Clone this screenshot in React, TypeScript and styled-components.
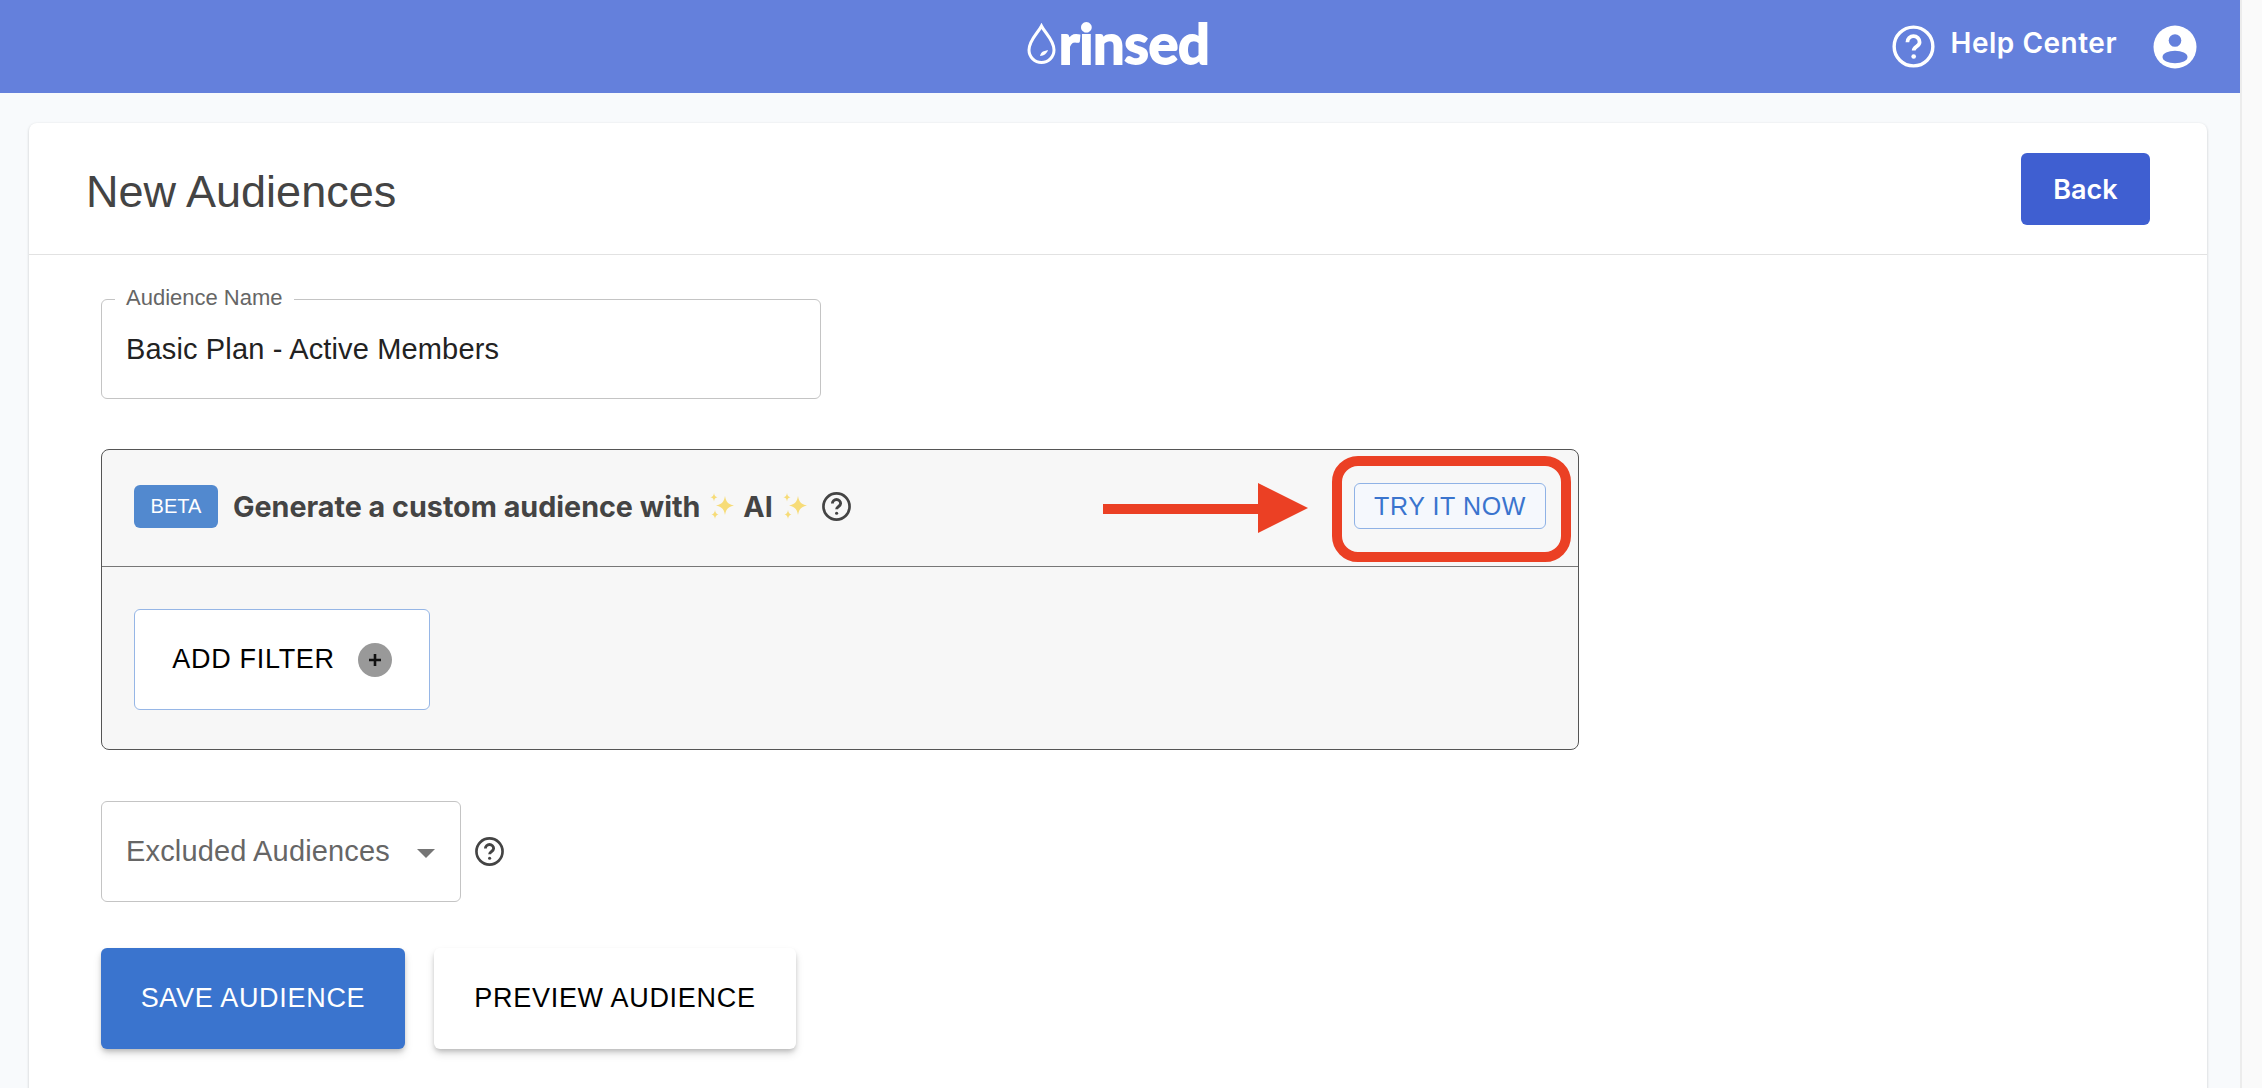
import styled, { createGlobalStyle } from "styled-components";

const GlobalStyle = createGlobalStyle`
  html, body {
    margin: 0;
    height: 100%;
    overflow: hidden;
    background: #f8fafc;
  }
  * {
    box-sizing: border-box;
  }
`;

const Page = styled.div`
  display: flex;
  width: 2262px;
  height: 1088px;
  overflow: hidden;
  font-family: "Liberation Sans", Arial, sans-serif;
`;

const Main = styled.div`
  width: 2240px;
  flex-shrink: 0;
  background: #f8fafc;
`;

const ScrollTrack = styled.div`
  flex: 1;
  background: #fafafa;
  border-left: 2px solid #ececec;
`;

const Header = styled.header`
  height: 93px;
  display: grid;
  grid-template-columns: 1fr auto 1fr;
  align-items: center;
  background: #6480dc;
  color: #fff;
  padding: 0 43px;
`;

const Logo = styled.div`
  grid-column: 2;
  display: flex;
  align-items: center;
  gap: 3px;
  margin-left: -4px;
  margin-top: -7px;
`;

const LogoText = styled.span`
  font-family: Lato, sans-serif;
  font-weight: 700;
  font-size: 56px;
  line-height: 50px;
  letter-spacing: -0.4px;
  -webkit-text-stroke: 1.8px #fff;
`;

const HeaderActions = styled.div`
  grid-column: 3;
  display: flex;
  align-items: center;
  justify-content: flex-end;
`;

const HelpLink = styled.span`
  font-family: Inter, sans-serif;
  font-weight: 600;
  font-size: 28px;
  letter-spacing: 0.5px;
  margin: -8px 36px 0 16px;
`;

const Content = styled.main`
  padding: 30px 33px 0 29px;
`;

const Card = styled.section`
  background: #fff;
  border-radius: 8px;
  box-shadow: 0 1px 3px rgba(0, 0, 0, 0.2);
  height: 1000px;
`;

const CardHeader = styled.div`
  height: 132px;
  display: flex;
  align-items: center;
  justify-content: space-between;
  padding: 0 57px 0 57px;
  border-bottom: 1px solid #e2e2e2;
`;

const Title = styled.h1`
  margin: 6px 0 0;
  font-weight: 400;
  font-size: 45px;
  color: #444;
`;

const BackButton = styled.button`
  width: 129px;
  height: 72px;
  padding: 2px 0 0;
  border: 0;
  border-radius: 6px;
  background: #3f5fd1;
  color: #fff;
  font-family: Inter, sans-serif;
  font-weight: 600;
  font-size: 27px;
`;

const CardBody = styled.div`
  padding: 44px 72px;
`;

const Field = styled.div`
  position: relative;
  width: 720px;
  height: 100px;
  display: flex;
  align-items: center;
  padding: 0 24px;
  border: 1px solid #c4c4c4;
  border-radius: 6px;
  font-size: 29px;
  letter-spacing: 0.15px;
  color: #222;
`;

const FieldLabel = styled.span`
  position: absolute;
  top: -14px;
  left: 13px;
  padding: 0 11px;
  background: #fff;
  font-size: 22px;
  line-height: 24px;
  letter-spacing: 0;
  color: #666;
`;

const GeneratorBox = styled.div`
  width: 1478px;
  margin-top: 50px;
  border: 1px solid #555;
  border-radius: 8px;
  background: #f7f7f7;
`;

const GeneratorHead = styled.div`
  height: 117px;
  display: flex;
  align-items: center;
  padding: 0 32px 4px;
  border-bottom: 1px solid #777;
`;

const BetaTag = styled.span`
  width: 84px;
  height: 43px;
  display: flex;
  align-items: center;
  justify-content: center;
  border-radius: 6px;
  background: #5289cf;
  color: #fff;
  font-size: 20px;
`;

const GeneratorTitle = styled.span`
  display: flex;
  align-items: center;
  gap: 8px;
  margin-left: 15px;
  font-family: Inter, sans-serif;
  font-weight: 700;
  font-size: 28.7px;
  color: #444;
`;

const HeadHelp = styled.span`
  display: flex;
  margin-left: 14px;
`;

const TryWrap = styled.div`
  position: relative;
  margin-left: auto;
`;

const TryButton = styled.button`
  display: block;
  width: 192px;
  height: 46px;
  border: 1px solid #8fb2e6;
  border-radius: 6px;
  background: #f5f8fd;
  color: #3a74ce;
  font-family: "Liberation Sans", Arial, sans-serif;
  font-size: 25px;
  letter-spacing: 0.6px;
`;

const RedOutline = styled.div`
  position: absolute;
  top: -27px;
  bottom: -33px;
  left: -22px;
  right: -25px;
  border: 10px solid #eb4024;
  border-radius: 26px;
  pointer-events: none;
`;

const ArrowMark = styled.svg`
  position: absolute;
  top: 0;
  left: -251px;
`;

const GeneratorBody = styled.div`
  padding: 42px 32px 39px;
`;

const AddFilter = styled.button`
  width: 296px;
  height: 101px;
  display: flex;
  align-items: center;
  justify-content: center;
  gap: 23px;
  border: 1px solid #96b6e6;
  border-radius: 6px;
  background: #fff;
  color: #000;
  font-family: "Liberation Sans", Arial, sans-serif;
  font-size: 27px;
  letter-spacing: 0.7px;
`;

const PlusBadge = styled.span`
  width: 34px;
  height: 34px;
  display: flex;
  align-items: center;
  justify-content: center;
  border-radius: 50%;
  background: #999;
`;

const SelectRow = styled.div`
  display: flex;
  align-items: center;
  gap: 14px;
  margin-top: 51px;
`;

const SelectBox = styled.div`
  width: 360px;
  height: 101px;
  display: flex;
  align-items: center;
  justify-content: space-between;
  padding: 0 25px 0 24px;
  border: 1px solid #c4c4c4;
  border-radius: 6px;
  font-size: 29px;
  letter-spacing: 0.15px;
  color: #666;
`;

const Caret = styled.span`
  width: 0;
  height: 0;
  margin-top: 3px;
  border-left: 9px solid transparent;
  border-right: 9px solid transparent;
  border-top: 9px solid #757575;
`;

const ButtonRow = styled.div`
  display: flex;
  gap: 29px;
  margin-top: 46px;
`;

const ActionButton = styled.button<{ $primary?: boolean }>`
  height: 101px;
  width: ${(p) => (p.$primary ? "304px" : "362px")};
  border: 0;
  border-radius: 6px;
  background: ${(p) => (p.$primary ? "#3a74ce" : "#fff")};
  color: ${(p) => (p.$primary ? "#fff" : "#000")};
  font-family: "Liberation Sans", Arial, sans-serif;
  font-size: 27px;
  letter-spacing: 0.7px;
  box-shadow: 0 3px 5px -1px rgba(0, 0, 0, 0.2), 0 5px 8px rgba(0, 0, 0, 0.12);
`;

function HelpIcon({ size, color, weight = 1.9 }: { size: number; color: string; weight?: number }) {
  return (
    <svg width={size} height={size} viewBox="0 0 24 24" fill="none">
      <circle cx="12" cy="12" r="10.8" stroke={color} strokeWidth={weight} />
      <path
        d="M8.6 9.6a3.4 3.4 0 0 1 6.8 0c0 2.3-3.3 2.4-3.3 4.6"
        stroke={color}
        strokeWidth={weight + 0.2}
      />
      <circle cx="12.1" cy="17.6" r="1.3" fill={color} />
    </svg>
  );
}

function UserIcon() {
  return (
    <svg width="44" height="44" viewBox="0 0 44 44">
      <circle cx="22" cy="22" r="21.5" fill="#fff" />
      <circle cx="22" cy="15.5" r="6.3" fill="#6480dc" />
      <ellipse cx="22" cy="32" rx="12.5" ry="6.2" fill="#6480dc" />
    </svg>
  );
}

function DropMark() {
  return (
    <svg width="29" height="41" viewBox="0 0 29 41" fill="none">
      <path
        d="M14.5 3C11 10 2 17 2 27a12.5 12.5 0 0 0 25 0C27 17 18 10 14.5 3Z"
        stroke="#fff"
        strokeWidth="3"
      />
      <path d="M13 33c4-.3 7-2.5 8-6l-5 1.5c-1.5.8-2.5 2.500-3 4.500Z" fill="#fff" />
    </svg>
  );
}

function Sparkles() {
  return (
    <svg width="27" height="26" viewBox="0 0 27 26" fill="#f7dc78">
      <path d="M17 3c1 6 3 8 9 9.500-6 1.500-8 3.500-9 9.500-1-6-3-8-9-9.500 6-1.500 8-3.500 9-9.500Z" />
      <path d="M6 0c.4 2.800 1.200 3.600 3.500 4.200C7.200 4.800 6.400 5.600 6 8.400 5.600 5.600 4.800 4.800 2.500 4.200 4.800 3.600 5.600 2.800 6 0Z" />
      <path d="M7 17c.4 3 1.200 3.800 3.500 4.500C8.200 22.200 7.400 23 7 26c-.4-3-1.200-3.800-3.500-4.500C5.800 20.800 6.600 20 7 17Z" />
    </svg>
  );
}

function App() {
  return (
    <Page>
      <GlobalStyle />
      <Main>
        <Header>
          <Logo>
            <DropMark />
            <LogoText>rinsed</LogoText>
          </Logo>
          <HeaderActions>
            <HelpIcon size={43} color="#fff" />
            <HelpLink>Help Center</HelpLink>
            <UserIcon />
          </HeaderActions>
        </Header>
        <Content>
          <Card>
            <CardHeader>
              <Title>New Audiences</Title>
              <BackButton>Back</BackButton>
            </CardHeader>
            <CardBody>
              <Field>
                <FieldLabel>Audience Name</FieldLabel>
                Basic Plan - Active Members
              </Field>
              <GeneratorBox>
                <GeneratorHead>
                  <BetaTag>BETA</BetaTag>
                  <GeneratorTitle>
                    Generate a custom audience with <Sparkles /> AI <Sparkles />
                  </GeneratorTitle>
                  <HeadHelp>
                    <HelpIcon size={29} color="#444" weight={2.2} />
                  </HeadHelp>
                  <TryWrap>
                    <TryButton>TRY IT NOW</TryButton>
                    <ArrowMark width="205" height="50" viewBox="0 0 205 50">
                      <path d="M0 21h155V0l50 25-50 25V31H0Z" fill="#eb4024" />
                    </ArrowMark>
                    <RedOutline />
                  </TryWrap>
                </GeneratorHead>
                <GeneratorBody>
                  <AddFilter>
                    ADD FILTER
                    <PlusBadge>
                      <svg width="16" height="16" viewBox="0 0 16 16">
                        <path d="M8 2v12M2 8h12" stroke="#111" strokeWidth="2.600" />
                      </svg>
                    </PlusBadge>
                  </AddFilter>
                </GeneratorBody>
              </GeneratorBox>
              <SelectRow>
                <SelectBox>
                  Excluded Audiences
                  <Caret />
                </SelectBox>
                <HelpIcon size={29} color="#444" weight={2.2} />
              </SelectRow>
              <ButtonRow>
                <ActionButton $primary>SAVE AUDIENCE</ActionButton>
                <ActionButton>PREVIEW AUDIENCE</ActionButton>
              </ButtonRow>
            </CardBody>
          </Card>
        </Content>
      </Main>
      <ScrollTrack />
    </Page>
  );
}

export default App;
